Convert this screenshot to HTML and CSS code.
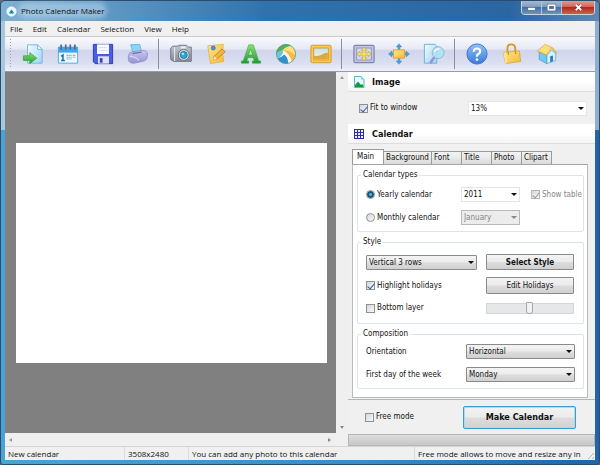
FILE: index.html
```html
<!DOCTYPE html>
<html lang="en">
<head>
<meta charset="utf-8">
<title>Photo Calendar Maker</title>
<link rel="stylesheet" href="styles.css">
</head>
<body>
<svg class="defs" aria-hidden="true">
  <defs>
    <linearGradient id="paper" x1="0" y1="0" x2="1" y2="1"><stop offset="0" stop-color="#f2fbff"/><stop offset="1" stop-color="#9fd5f3"/></linearGradient>
    <linearGradient id="green" x1="0" y1="0" x2="0" y2="1"><stop offset="0" stop-color="#8be36a"/><stop offset="1" stop-color="#1f9a34"/></linearGradient>
    <linearGradient id="gold" x1="0" y1="0" x2="1" y2="1"><stop offset="0" stop-color="#ffe88a"/><stop offset="1" stop-color="#f5b83c"/></linearGradient>
    <linearGradient id="lilac" x1="0" y1="0" x2="0" y2="1"><stop offset="0" stop-color="#c9c9f2"/><stop offset="1" stop-color="#9494d0"/></linearGradient>
    <linearGradient id="blue" x1="0" y1="0" x2="0" y2="1"><stop offset="0" stop-color="#8cc4f7"/><stop offset="1" stop-color="#3a78d8"/></linearGradient>
    <linearGradient id="steel" x1="0" y1="0" x2="0" y2="1"><stop offset="0" stop-color="#c3c9d2"/><stop offset="1" stop-color="#858d9a"/></linearGradient>
    <linearGradient id="dusk" x1="0" y1="0" x2="0" y2="1"><stop offset="0" stop-color="#bfe3f7"/><stop offset="1" stop-color="#fff3c4"/></linearGradient>
  </defs>
</svg>
<div class="window">
  <header class="titlebar">
    <svg class="logo" viewBox="0 0 12 12"><circle cx="6" cy="6" r="5" fill="#e9f7fc" stroke="#fff"/><path d="M3 7.500 6 3.500 9 7.500Q6 9.500 3 7.500Z" fill="#2aa6cf"/><circle cx="6" cy="6.500" r="1" fill="#1c6f92"/></svg>
    <h1 class="title"><span>Photo Calendar Maker</span></h1>
    <div class="caption">
      <button class="cap" aria-label="Minimize"><svg viewBox="0 0 12 12"><rect x="2" y="6" width="8" height="3" fill="#fff" stroke="#4c5b72" stroke-width=".6"/></svg></button>
      <button class="cap" aria-label="Maximize"><svg viewBox="0 0 12 12"><rect x="2.500" y="3.500" width="7" height="5" fill="#536f94" stroke="#4c5b72" stroke-width="3"/><rect x="2.500" y="3.500" width="7" height="5" fill="#536f94" stroke="#fff" stroke-width="1.800"/></svg></button>
      <button class="cap close" aria-label="Close"><svg viewBox="0 0 12 12"><path d="M3 3 9 9M9 3 3 9" stroke="#6b2a2a" stroke-width="3.200"/><path d="M3 3 9 9M9 3 3 9" stroke="#fff" stroke-width="2"/></svg></button>
    </div>
  </header>
  <div class="client">
    <nav class="menu">
      <button>File</button><button>Edit</button><button>Calendar</button><button>Selection</button><button>View</button><button>Help</button>
    </nav>
    <div class="toolbar">
      <span class="grip"></span>
      <button class="tool" aria-label="Open"><svg viewBox="0 0 24 24"><path d="M6 2H17L22 7V22H6Z" fill="url(#paper)" stroke="#74b4da"/><path d="M17 2V7H22Z" fill="#fff" stroke="#74b4da"/><path d="M1.500 14H8.500V10.500L16 16.500 8.500 22.500V19H1.500Z" fill="url(#green)" stroke="#3c9a3c" stroke-width=".8"/></svg></button>
      <button class="tool" aria-label="Calendar"><svg viewBox="0 0 24 24"><path d="M1.500 4.500H22.500V22H1.500Z" fill="#eef9ff" stroke="#4fa5e0"/><path d="M1.500 4.500H22.500V10.500H1.500Z" fill="#3ea6ec"/><path d="M4.500 1.500V7M9.500 1.500V7M14.500 1.500V7M19.500 1.500V7" stroke="#5d6673" stroke-width="1.800"/><path d="M4.500 14.500 6.500 13V19M4.500 19H8.500" stroke="#1769b8" stroke-width="1.600" fill="none"/><path d="M10.500 13.500H16M10.500 15.500H16M10.500 17.500H16" stroke="#6fb6e4" stroke-width="1.200" stroke-dasharray="1.500 .5"/><path d="M17 13.500H20M17 15.500H20" stroke="#e09a92" stroke-width="1.200"/></svg></button>
      <button class="tool" aria-label="Save"><svg viewBox="0 0 24 24"><path d="M1.500 1.500H22.500V22.500H3.500L1.500 20.500Z" fill="#4a5ee4" stroke="#2b37ae"/><path d="M5.500 1.500H18.500V12H5.500Z" fill="#fafcff"/><path d="M7.500 5H16.500M7.500 8H16.500" stroke="#d3d7e6"/><path d="M6.500 14.500H18.500V22.500H6.500Z" fill="#e0e3f0"/><path d="M8.500 16.500H11.500V21.500H8.500Z" fill="#3443c3"/></svg></button>
      <button class="tool" aria-label="Print"><svg viewBox="0 0 24 24"><path d="M4 2 14 1.500 16 11 7 12Z" fill="#8cd5f4" stroke="#64b6de"/><path d="M1.500 14Q2 10 6 9.500L17 8Q22.500 8 22.500 13Q22.500 18 19 19.500L8 22Q2 22.500 1.500 18Z" fill="url(#lilac)" stroke="#8a8ac2" stroke-width=".8"/><path d="M6 11.500 16 10" stroke="#7575a8" stroke-width="1.500"/><path d="M3 14.500Q10 15 13 19" stroke="#d8d8f7" stroke-width="1.200" fill="none"/></svg></button>
      <span class="sep"></span>
      <button class="tool" aria-label="Photo"><svg viewBox="0 0 24 24"><path d="M.8 5.500 3 3.500H8L10 2.500H18L20 4.500H23.200V20H4L.8 18Z" fill="url(#steel)" stroke="#69717d"/><path d="M5 5V19.500" stroke="#e3e8ee" stroke-width="1.200"/><rect x="12" y="3.800" width="5" height="2.200" fill="#edf2f7"/><circle cx="15" cy="13" r="6" fill="#d5dbe2" stroke="#69717d"/><circle cx="15" cy="13" r="3.800" fill="#2ba6dc" stroke="#2f7199"/><circle cx="14" cy="11.800" r="1.300" fill="#b6efff"/></svg></button>
      <button class="tool" aria-label="Note"><svg viewBox="0 0 24 24"><path d="M3 3 20 1.500 19 11 20.500 20 6 22.500Z" fill="url(#gold)" stroke="#e2ab3a" stroke-width=".8"/><path d="M9 18.500 10 14.500 18.500 6.500 22 9.500 13 17.500Z" fill="#f6b240" stroke="#b8731a" stroke-width=".8"/><path d="M9 18.500 10 14.500 13 17.500Z" fill="#fff0c5"/><circle cx="9" cy="5.500" r="2.200" fill="#3f9add" stroke="#26679f" stroke-width=".7"/></svg></button>
      <button class="tool" aria-label="Text"><svg viewBox="0 0 24 24"><path d="M9.500 2H14.500L20.500 19.500H22.500V22H13.500V19.500H15.500L14.500 16H8.500L7.500 19.500H9.500V22H1.500V19.500H3.500ZM11.500 6.500 9.300 13H13.700Z" fill="url(#green)" stroke="#3ba344" stroke-width=".6" fill-rule="evenodd"/></svg></button>
      <button class="tool" aria-label="Clipart"><svg viewBox="0 0 24 24"><circle cx="12" cy="12" r="10.500" fill="#fdf6e0"/><path d="M1.500 12A10.500 10.500 0 0 1 18 3.500Q12 3.500 9 7.500Q5 8.500 1.500 12Z" fill="#4db35a"/><path d="M9 7.500Q12 3.500 18 3.500A10.500 10.500 0 0 1 22.200 14Q18 8 9 7.500Z" fill="#ffdf76"/><path d="M9 7.500Q18 8 22.200 14A10.500 10.500 0 0 1 18.500 20.200Q17 13 9 7.500Z" fill="#f3b94a"/><path d="M1.500 12Q5 8.500 9 7.500Q9 12 5 15.500Q3 16 2 15Z" fill="#66c4ee"/><path d="M2.500 16Q7 16 10 12.500Q14 15 14.500 22.200A10.500 10.500 0 0 1 2.500 16Z" fill="#2f90d6"/><circle cx="12" cy="12" r="10.500" fill="none" stroke="#4a8f86" stroke-width=".8"/></svg></button>
      <button class="tool" aria-label="Frame"><svg viewBox="0 0 24 24"><rect x="1" y="2.500" width="22" height="19" rx="1.500" fill="#ffc94b" stroke="#d1962b"/><rect x="4" y="5.500" width="16" height="13" fill="url(#dusk)" stroke="#d99a26"/><path d="M4.500 13.500Q9 15 13 12.500T19.500 11V18H4.500Z" fill="#d9a93c"/></svg></button>
      <span class="sep"></span>
      <button class="tool" aria-label="Fit"><svg viewBox="0 0 24 24"><rect x="1" y="2.500" width="22" height="19" rx="1.500" fill="#c3c4e4" stroke="#8283b0" stroke-width="1.300"/><rect x="4" y="5.500" width="16" height="13" fill="#cfdcec" stroke="#9193bd"/><path d="M12 4.500 15 8H13.300V10.700H16.500V9L20 12 16.500 15V13.300H13.300V16H15L12 19.500 9 16H10.700V13.300H7.500V15L4 12 7.500 9V10.700H10.700V8H9Z" fill="#f9dc6a" stroke="#bba24a" stroke-width=".7"/></svg></button>
      <button class="tool" aria-label="Resize"><svg viewBox="0 0 24 24"><path d="M12 .8 15 4.300H13V19.700H15L12 23.200 9 19.700H11V4.300H9ZM.6 12 4.300 8.800V11H19.700V8.800L23.400 12 19.700 15.200V13H4.300V15.200Z" fill="#4e9fda" stroke="#3a84c0" stroke-width=".5"/><rect x="6" y="7.500" width="12" height="9" fill="url(#gold)" stroke="#e0a02e"/></svg></button>
      <button class="tool" aria-label="Preview"><svg viewBox="0 0 24 24"><path d="M1.500 1.500H13L15 3.500V22H1.500Z" fill="url(#paper)" stroke="#64aed9"/><path d="M12 16 8.500 21" stroke="#a191d6" stroke-width="3" stroke-linecap="round"/><circle cx="16.500" cy="10.500" r="6.500" fill="#b0e3f5" fill-opacity=".85" stroke="#83b8d3"/><path d="M12.500 9.500Q14 6 18 6.500" stroke="#fff" stroke-width="1.500" fill="none"/></svg></button>
      <span class="sep"></span>
      <button class="tool" aria-label="Help"><svg viewBox="0 0 24 24"><circle cx="12" cy="12" r="11" fill="url(#blue)" stroke="#3b72c4"/><path d="M8.500 9.500Q8.500 6 12 6T15.500 9.300Q15.500 11 13.500 12T12 15" fill="none" stroke="#fff" stroke-width="2.300"/><circle cx="12" cy="18" r="1.500" fill="#fff"/></svg></button>
      <button class="tool" aria-label="Buy"><svg viewBox="0 0 24 24"><path d="M7 10V6Q7 1.500 11 1.500T15.500 5V9" fill="none" stroke="#d9971f" stroke-width="2"/><path d="M2.500 10.500 20 8.500 21.500 20 5 22.500Z" fill="url(#gold)" stroke="#dc9c2a" stroke-width=".8"/><path d="M2.500 10.500 5 22.500 7 22 5.500 10.200Z" fill="#ffe39a"/><path d="M8 13V10M16 12V9" stroke="#b87a1c"/></svg></button>
      <button class="tool" aria-label="Home"><svg viewBox="0 0 24 24"><path d="M3.500 10 12 13V22.500L3.500 18Z" fill="#74c8ee" stroke="#4a9cc8" stroke-width=".8"/><path d="M12 13 17 7.500 21.500 12V19L12 22.500Z" fill="#d6f1fc" stroke="#5fa9cf" stroke-width=".8"/><path d="M1.500 8.500 10 1.500 17.500 5 11.500 13Z" fill="#ffe074" stroke="#dba636" stroke-width=".8"/><path d="M17.500 5 22.800 11.500" stroke="#e0b04a" stroke-width="1.500"/><path d="M15.500 14.500 18.500 13.500V19.800L15.500 21Z" fill="#2f7ab5"/></svg></button>
    </div>
    <div class="work">
      <main class="viewport">
        <div class="canvas"><div class="page"></div></div>
        <div class="vscroll"><i class="tri up"></i><i class="tri down"></i></div>
        <div class="hscroll"><i class="tri left"></i><i class="tri right"></i></div>
      </main>
      <aside class="panel">
        <div class="head"><svg viewBox="0 0 12 12"><path d="M1.500 .5H8L11 3.500V11.500H1.500Z" fill="#e9fbff" stroke="#57b6d8"/><path d="M8 .5V3.500H11Z" fill="#7fcbe6"/><path d="M2 11V9L5 5.500 8 9 9 8 10.500 9.500V11Z" fill="#149c3c"/></svg><h2>Image</h2></div>
        <div class="zoom">
          <label class="check"><input type="checkbox" checked>Fit to window</label>
          <span class="combo"><select aria-label="Zoom"><option>13%</option></select></span>
        </div>
        <div class="head"><svg viewBox="0 0 12 12"><rect x="1" y="1" width="9" height="9" fill="#eef0ff"/><path d="M1.500 1V11M4.500 1V11M7.500 1V11M10.500 1V11M1 1.500H11M1 4.500H11M1 7.500H11M1 10.500H11" fill="none" stroke="#2c2ea0"/></svg><h2>Calendar</h2></div>
        <div class="tabbed">
          <div class="tabs" role="tablist">
            <button role="tab" class="tab active">Main</button><button role="tab" class="tab">Background</button><button role="tab" class="tab">Font</button><button role="tab" class="tab">Title</button><button role="tab" class="tab">Photo</button><button role="tab" class="tab">Clipart</button>
          </div>
          <div class="sheet">
            <fieldset class="group types">
              <legend>Calendar types</legend>
              <label class="check"><input type="radio" name="kind" checked>Yearly calendar</label>
              <span class="combo"><select aria-label="Year"><option>2011</option></select></span>
              <label class="check off"><input type="checkbox" checked disabled>Show table</label>
              <label class="check"><input type="radio" name="kind">Monthly calendar</label>
              <span class="combo off"><select aria-label="Month" disabled><option>January</option></select></span>
            </fieldset>
            <fieldset class="group style">
              <legend>Style</legend>
              <span class="combo raised"><select aria-label="Style"><option>Vertical 3 rows</option></select></span>
              <button class="btn strong">Select Style</button>
              <label class="check"><input type="checkbox" checked>Highlight holidays</label>
              <button class="btn">Edit Holidays</button>
              <label class="check"><input type="checkbox">Bottom layer</label>
              <input class="slider" type="range" aria-label="Layer opacity" value="49">
            </fieldset>
            <fieldset class="group comp">
              <legend>Composition</legend>
              <label for="orient">Orientation</label>
              <span class="combo raised"><select id="orient"><option>Horizontal</option></select></span>
              <label for="first">First day of the week</label>
              <span class="combo raised"><select id="first"><option>Monday</option></select></span>
            </fieldset>
          </div>
        </div>
        <div class="action">
          <label class="check"><input type="checkbox">Free mode</label>
          <button class="make">Make Calendar</button>
        </div>
        <div class="progress"></div>
      </aside>
    </div>
    <footer class="status">
      <span>New calendar</span><span>3508x2480</span><span>You can add any photo to this calendar</span><span class="hint">Free mode allows to move and resize any in</span>
      <i class="size"></i>
    </footer>
  </div>
</div>
</body>
</html>
```

FILE: styles.css
```css
* { box-sizing: border-box; }
html, body { height: 100%; }
body {
  margin: 0;
  background: #5a6c7e;
  color: #111;
  font: 8px/12px "DejaVu Sans Condensed", "DejaVu Sans", sans-serif;
}
button, select, input { font: inherit; color: inherit; margin: 0; padding: 0; }
button { background: none; border: 0; }
h1, h2 { margin: 0; }
.defs { position: absolute; width: 0; height: 0; }

.window {
  height: 100vh;
  display: flex;
  flex-direction: column;
  padding: 0 4px 4px;
  border: 1px solid #2d4c6c;
  border-radius: 5px 5px 3px 3px;
  background:
    linear-gradient(90deg, #7fb0d0, #2e72ae 45%, #2b66a3 85%, #5e88b2) top / 100% 20px no-repeat,
    linear-gradient(90deg, #a9c8dd 50%, #8fb0cc 50%) top / 100% 129px no-repeat,
    linear-gradient(90deg, #4ba3d3, #3a8cc4 60%, #1f65a8);
}

.titlebar {
  flex: none;
  height: 20px;
  display: flex;
  align-items: center;
  gap: 4px;
  padding-left: 1px;
}
.logo { width: 11px; height: 11px; }
.title { flex: 1; font: 8px/12px "Open Sans", "Noto Sans", sans-serif; }
.title span {
  border-radius: 6px;
  background: rgba(200, 226, 243, .45);
  box-shadow: 0 0 5px 3px rgba(200, 226, 243, .45);
}
.caption {
  align-self: flex-start;
  display: flex;
  border: 1px solid #c4d4e5;
  border-top: 0;
  border-radius: 0 0 4px 4px;
  overflow: hidden;
}
.cap {
  width: 20px;
  height: 13px;
  display: grid;
  place-items: center;
  border-right: 1px solid #b0c3d8;
  background: linear-gradient(#a3bad4, #7f9cc0 45%, #466f9f 50%, #7295bb);
}
.cap svg { width: 11px; height: 11px; }
.cap.close {
  width: 32px;
  border-right: 0;
  background: linear-gradient(#dd9c92, #cd6759 45%, #b02a1c 50%, #d2604c);
}

.client {
  flex: 1;
  min-height: 0;
  display: flex;
  flex-direction: column;
  background: #f0f0f0;
}
.menu {
  flex: none;
  height: 15px;
  display: flex;
  gap: 10px;
  padding-left: 5px;
  font: 8px/14px "Open Sans", "Noto Sans", sans-serif;
}
.toolbar {
  flex: none;
  height: 36px;
  display: flex;
  align-items: center;
  border-top: 1px solid #c9c9c9;
  border-bottom: 1px solid #9b9da6;
  background: linear-gradient(#fafbfe, #e6e9f5 35%, #d0d5eb 40%, #d9def0 75%, #eef1fb);
}
.grip { width: 10px; height: 30px; flex: none; }
.grip::before {
  content: "";
  display: block;
  width: 1px;
  height: 30px;
  margin-left: 5px;
  background: repeating-linear-gradient(#9a9eb0 0 1px, transparent 1px 3px);
}
.tool { flex: none; width: 35px; height: 32px; display: grid; place-items: center; }
.tool svg { width: 22px; height: 22px; }
.sep { flex: none; width: 8px; height: 30px; }
.sep::before { content: ""; display: block; width: 1px; height: 30px; margin-left: 3px; background: #8b8f9d; }

.work { flex: 1; min-height: 0; display: grid; grid-template-columns: 343fr 247fr; }
.viewport {
  display: grid;
  grid-template: minmax(0, 1fr) 13px / minmax(0, 1fr) 12px;
}
.canvas { background: #808080; display: flex; align-items: center; padding: 0 9px 0 11px; }
.page { flex: 1; aspect-ratio: 311 / 220; background: #fff; }
.vscroll, .hscroll { display: flex; align-items: center; justify-content: space-between; background: #efefef; }
.vscroll { flex-direction: column; padding: 4px 0; }
.hscroll { padding: 0 5px 0 4px; }
.tri { border: 2px solid transparent; }
.up { border-top: 0; border-bottom: 3px solid #999; }
.down { border-bottom: 0; border-top: 3px solid #888; }
.left { border-left: 0; border-right: 3px solid #999; }
.right { border-right: 0; border-left: 3px solid #888; }

.panel { display: flex; flex-direction: column; min-width: 0; }
.head {
  flex: none;
  height: 20px;
  display: flex;
  align-items: center;
  gap: 7px;
  padding-left: 5px;
  border-bottom: 1px solid #dedede;
  background: linear-gradient(#fff 50%, #f4f4f5);
}
.head svg { width: 12px; height: 12px; }
.head h2 { font-size: 9px; line-height: 14px; }
.zoom {
  flex: none;
  height: 32px;
  display: grid;
  grid-template-columns: 1fr 119px;
  align-items: center;
  padding: 0 8px 0 11px;
}
.check { display: flex; align-items: center; gap: 2px; white-space: nowrap; }
.check input {
  appearance: none;
  flex: none;
  width: 9px;
  height: 9px;
  display: grid;
  place-items: center;
  border: 1px solid #8e9296;
  background: linear-gradient(135deg, #d3d7dc, #f8f8f8);
}
.check input[type="checkbox"]:checked::before {
  content: "";
  width: 3px;
  height: 6px;
  border: solid #35539a;
  border-width: 0 1px 1px 0;
  transform: rotate(40deg);
}
.check input[type="radio"] { border-radius: 50%; }
.check input[type="radio"]:checked { background: radial-gradient(#48b9e0 0 1px, #17527b 2px 3px, #dce6ee 4px); }
.check.off { color: #868686; }
.check.off input { border-color: #b4b6b8; }
.check.off input[type="checkbox"]:checked::before { border-color: #999; }

.combo { position: relative; display: block; height: 15px; background: #fff; border: 1px solid #e3e5e8; }
.combo select {
  appearance: none;
  display: block;
  width: 100%;
  height: 13px;
  padding: 0 10px 0 2px;
  border: 0;
  background: none;
  line-height: 13px;
  opacity: 1;
}
.combo::after {
  content: "";
  position: absolute;
  right: 2px;
  top: 5px;
  border: 3px solid transparent;
  border-top-color: #111;
  border-bottom: 0;
  pointer-events: none;
}
.combo.off { background: #ececec; border-color: #b9b9b9; color: #858585; }
.combo.off::after { border-top-color: #888; }
.combo.raised, .btn {
  border: 1px solid #8a8a8a;
  border-radius: 1px;
  background: linear-gradient(#f3f3f3, #ebebeb 48%, #dddddd 52%, #d0d0d0);
}

.tabbed { flex: 1; min-height: 0; display: flex; flex-direction: column; padding: 5px 7px 1px 4px; }
.tabs { flex: none; height: 15px; display: flex; align-items: flex-end; }
.tab {
  height: 13px;
  min-width: 30px;
  padding: 0 2px;
  text-align: left;
  line-height: 12px;
  border: 1px solid #9a9a9a;
  border-left-width: 0;
  border-bottom: 0;
  background: linear-gradient(#f2f2f2, #e9e9e9 50%, #dadada);
}
.tab.active { height: 15px; width: 32px; padding: 0 4px; border-left-width: 1px; background: #fff; }
.sheet {
  flex: 1;
  display: flex;
  flex-direction: column;
  gap: 4px;
  padding: 4px 3px 0 4px;
  background: #fff;
  border: 1px solid #b9bcbf;
  border-top-color: #a5a5a5;
}
.group {
  min-width: 0;
  margin: 0;
  padding: 0 8px;
  border: 1px solid #dce4e9;
  border-radius: 2px;
  display: grid;
  align-items: center;
}
.group legend { padding: 0 2px; margin-left: -5px; }
.types { height: 63px; grid-template-columns: 95px 59px 1fr; grid-template-rows: 15px 15px; row-gap: 8px; padding-top: 6px; align-content: start; }
.types .check.off { margin-left: 11px; }
.style { height: 88px; grid-template-columns: 111px 88px; grid-template-rows: 16px 17px 14px; column-gap: 9px; row-gap: 7px; padding-top: 6px; align-content: start; }
.comp { height: 61px; grid-template-columns: 100px 109px; grid-template-rows: 15px 15px; row-gap: 8px; padding-top: 4px; align-content: start; }
.btn { height: 100%; line-height: 13px; }
.btn.strong { font-weight: bold; }
.slider { appearance: none; width: 88px; height: 11px; background: #e6e7e8; border: 1px solid #d3d4d6; }
.slider::-webkit-slider-thumb {
  appearance: none;
  width: 7px;
  height: 12px;
  border: 1px solid #a4a6a8;
  border-radius: 1px 1px 3px 3px;
  background: #f2f2f2;
}

.action {
  flex: none;
  height: 35px;
  display: flex;
  align-items: center;
  justify-content: space-between;
  padding: 0 19px 0 17px;
  border-top: 1px solid #b5b5b5;
}
.make {
  width: 113px;
  height: 23px;
  border: 1px solid #3c9dc9;
  border-radius: 2px;
  box-shadow: inset 0 0 0 1px #a9dcef;
  background: linear-gradient(#f3f3f3, #ebebeb 48%, #dddddd 52%, #d2d2d2);
  font-size: 9px;
  font-weight: bold;
}
.progress {
  flex: none;
  height: 12px;
  border: 1px solid #b5b5b5;
  background: linear-gradient(#dedede, #c6c6c6);
}

.status {
  flex: none;
  position: relative;
  height: 14px;
  display: grid;
  grid-template-columns: 120px 64px 1fr 180px;
  border-top: 1px solid #d5d5d5;
  font: 8px/13px "Open Sans", "Noto Sans", sans-serif;
}
.status span { padding-left: 3px; white-space: nowrap; border-right: 1px solid #dcdcdc; }
.status .hint { border-right: 0; }
.size {
  position: absolute;
  right: 1px;
  bottom: 1px;
  width: 7px;
  height: 7px;
  background: repeating-linear-gradient(135deg, transparent 0 2px, #b9b9b9 2px 3px);
  clip-path: polygon(100% 0, 100% 100%, 0 100%);
}
```
